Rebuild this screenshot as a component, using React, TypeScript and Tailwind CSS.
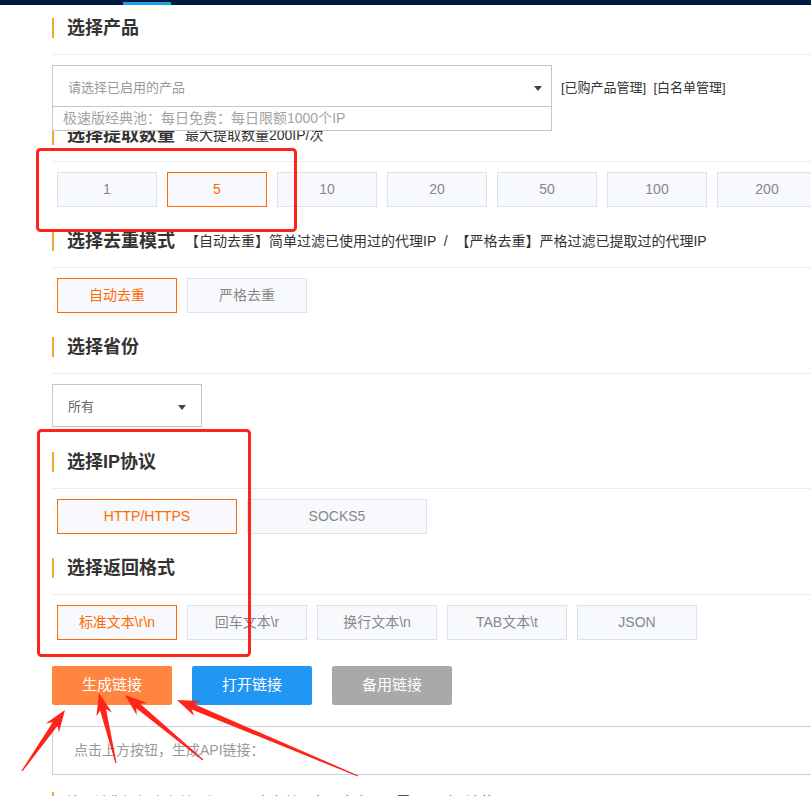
import React from 'react';

const Heading: React.FC<{ title: string; sub?: string; className?: string }> = ({ title, sub, className }) => (
  <>
    <div className={`flex items-center h-[20px] border-l-2 border-[#f0ab2e] pl-[13px] ${className ?? ''}`}>
      <span className="text-[18px] leading-none font-bold text-[#333]">{title}</span>
      {sub && <span className="ml-[10px] text-[14px] leading-none text-[#333] whitespace-pre">{sub}</span>}
    </div>
    <div className="mt-[16px] border-t border-[#ececec]" />
  </>
);

const Choice: React.FC<{ label: string; active?: boolean; width: string }> = ({ label, active, width }) => (
  <div
    className={`${width} h-[35px] shrink-0 flex items-center justify-center border text-[14px] bg-[#f7f9fc] ${
      active ? 'border-[#ff6a00] text-[#ff6a00]' : 'border-[#d7e3ef] text-[#888]'
    }`}
  >
    {label}
  </div>
);

const Caret = () => <div className="w-0 h-0 border-x-[4px] border-x-transparent border-t-[5px] border-t-[#444]" />;

function arrow(x1: number, y1: number, x2: number, y2: number) {
  const dx = x2 - x1;
  const dy = y2 - y1;
  const len = Math.hypot(dx, dy);
  const ux = dx / len;
  const uy = dy / len;
  const nx = -uy;
  const ny = ux;
  const head = 22;
  const p = (along: number, side: number) =>
    `${(x2 - ux * along + nx * side).toFixed(1)},${(y2 - uy * along + ny * side).toFixed(1)}`;
  return [
    `${(x1 + nx * 0.6).toFixed(1)},${(y1 + ny * 0.6).toFixed(1)}`,
    p(head * 0.78, 3),
    p(head, 8),
    `${x2},${y2}`,
    p(head, -8),
    p(head * 0.78, -3),
    `${(x1 - nx * 0.6).toFixed(1)},${(y1 - ny * 0.6).toFixed(1)}`,
  ].join(' ');
}

export default function App() {
  const counts = ['1', '5', '10', '20', '50', '100', '200'];
  const formats = ['标准文本\\r\\n', '回车文本\\r', '换行文本\\n', 'TAB文本\\t', 'JSON'];

  return (
    <div className="relative h-screen w-full overflow-hidden bg-white font-['Liberation_Sans','Noto_Sans_CJK_SC',sans-serif]">
      <div className="h-[5px] bg-[#001b40] flex">
        <div className="ml-[123px] mt-[2px] w-[48px] h-[3px] bg-[#1e9fe8]" />
      </div>

      <div className="pl-[52px] w-[1150px]">
        <Heading title="选择产品" className="mt-[13px]" />
        <div className="mt-[10px] flex items-center">
          <div className="relative w-[500px] h-[42px] border border-[#c3c7cd] flex items-center pt-[4px] pl-[15px] pr-[9px] text-[13px] text-[#999]">
            <span>请选择已启用的产品</span>
            <div className="ml-auto">
              <Caret />
            </div>
            <div className="absolute z-10 top-full left-[-1px] w-[500px] h-[25px] border border-[#c3c7cd] bg-white flex items-center pl-[10px] text-[14px] text-[#a3a3a3]">
              极速版经典池：每日免费：每日限额1000个IP
            </div>
          </div>
          <span className="ml-[9px] pt-[4px] text-[13px] text-[#333] whitespace-pre">[已购产品管理]  [白名单管理]</span>
        </div>

        <Heading title="选择提取数量" sub="最大提取数量200IP/次" className="mt-[18px]" />
        <div className="mt-[10px] ml-[5px] flex gap-[10px]">
          {counts.map((c) => (
            <Choice key={c} label={c} active={c === '5'} width="w-[100px]" />
          ))}
        </div>

        <Heading
          title="选择去重模式"
          sub="【自动去重】简单过滤已使用过的代理IP  /  【严格去重】严格过滤已提取过的代理IP"
          className="mt-[24px]"
        />
        <div className="mt-[10px] ml-[5px] flex gap-[10px]">
          <Choice label="自动去重" active width="w-[120px]" />
          <Choice label="严格去重" width="w-[120px]" />
        </div>

        <Heading title="选择省份" className="mt-[24px]" />
        <div className="mt-[10px] w-[150px] h-[43px] border border-[#c3c7cd] flex items-center pt-[3px] pl-[15px] pr-[15px] text-[13px] text-[#666]">
          <span>所有</span>
          <div className="ml-auto">
            <Caret />
          </div>
        </div>

        <Heading title="选择IP协议" className="mt-[25px]" />
        <div className="mt-[10px] ml-[5px] flex gap-[10px]">
          <Choice label="HTTP/HTTPS" active width="w-[180px]" />
          <Choice label="SOCKS5" width="w-[180px]" />
        </div>

        <Heading title="选择返回格式" className="mt-[24px]" />
        <div className="mt-[10px] ml-[5px] flex gap-[10px]">
          {formats.map((f, i) => (
            <Choice key={f} label={f} active={i === 0} width="w-[120px]" />
          ))}
        </div>

        <div className="mt-[26px] flex gap-[20px]">
          <button className="w-[120px] h-[39px] rounded-[2px] bg-[#ff8541] text-white text-[15px]">生成链接</button>
          <button className="w-[120px] h-[39px] rounded-[2px] bg-[#2196f3] text-white text-[15px]">打开链接</button>
          <button className="w-[120px] h-[39px] rounded-[2px] bg-[#a9a9a9] text-white text-[15px]">备用链接</button>
        </div>

        <div className="mt-[21px] w-[1000px] h-[49px] border border-[#cbd0d8] flex items-center pl-[21px] text-[14px] text-[#999]">
          点击上方按钮，生成API链接：
        </div>

        <div className="mt-[17px] flex items-center h-[20px] border-l-2 border-[#f0ab2e] pl-[13px] text-[14px]">
          <span className="text-[#ff2020]">注：请先添加白名单再提取IP</span>
          <span className="ml-[8px] text-[#333]">白名单可在用户中心设置，否则无法使用</span>
        </div>
      </div>

      <svg className="absolute inset-0 pointer-events-none" width="811" height="796" viewBox="0 0 811 796">
        <rect x="37.5" y="149.5" width="258" height="81" rx="3" fill="none" stroke="#ff2419" strokeWidth="3" />
        <rect x="38.5" y="430.5" width="211" height="225" rx="3" fill="none" stroke="#ff2419" strokeWidth="3" />
        <polygon points={arrow(22, 771, 65, 710)} fill="#ff2419" />
        <polygon points={arrow(116, 763, 99, 693)} fill="#ff2419" />
        <polygon points={arrow(203, 760, 125, 695)} fill="#ff2419" />
        <polygon points={arrow(358, 776, 177, 700)} fill="#ff2419" />
      </svg>
    </div>
  );
}
